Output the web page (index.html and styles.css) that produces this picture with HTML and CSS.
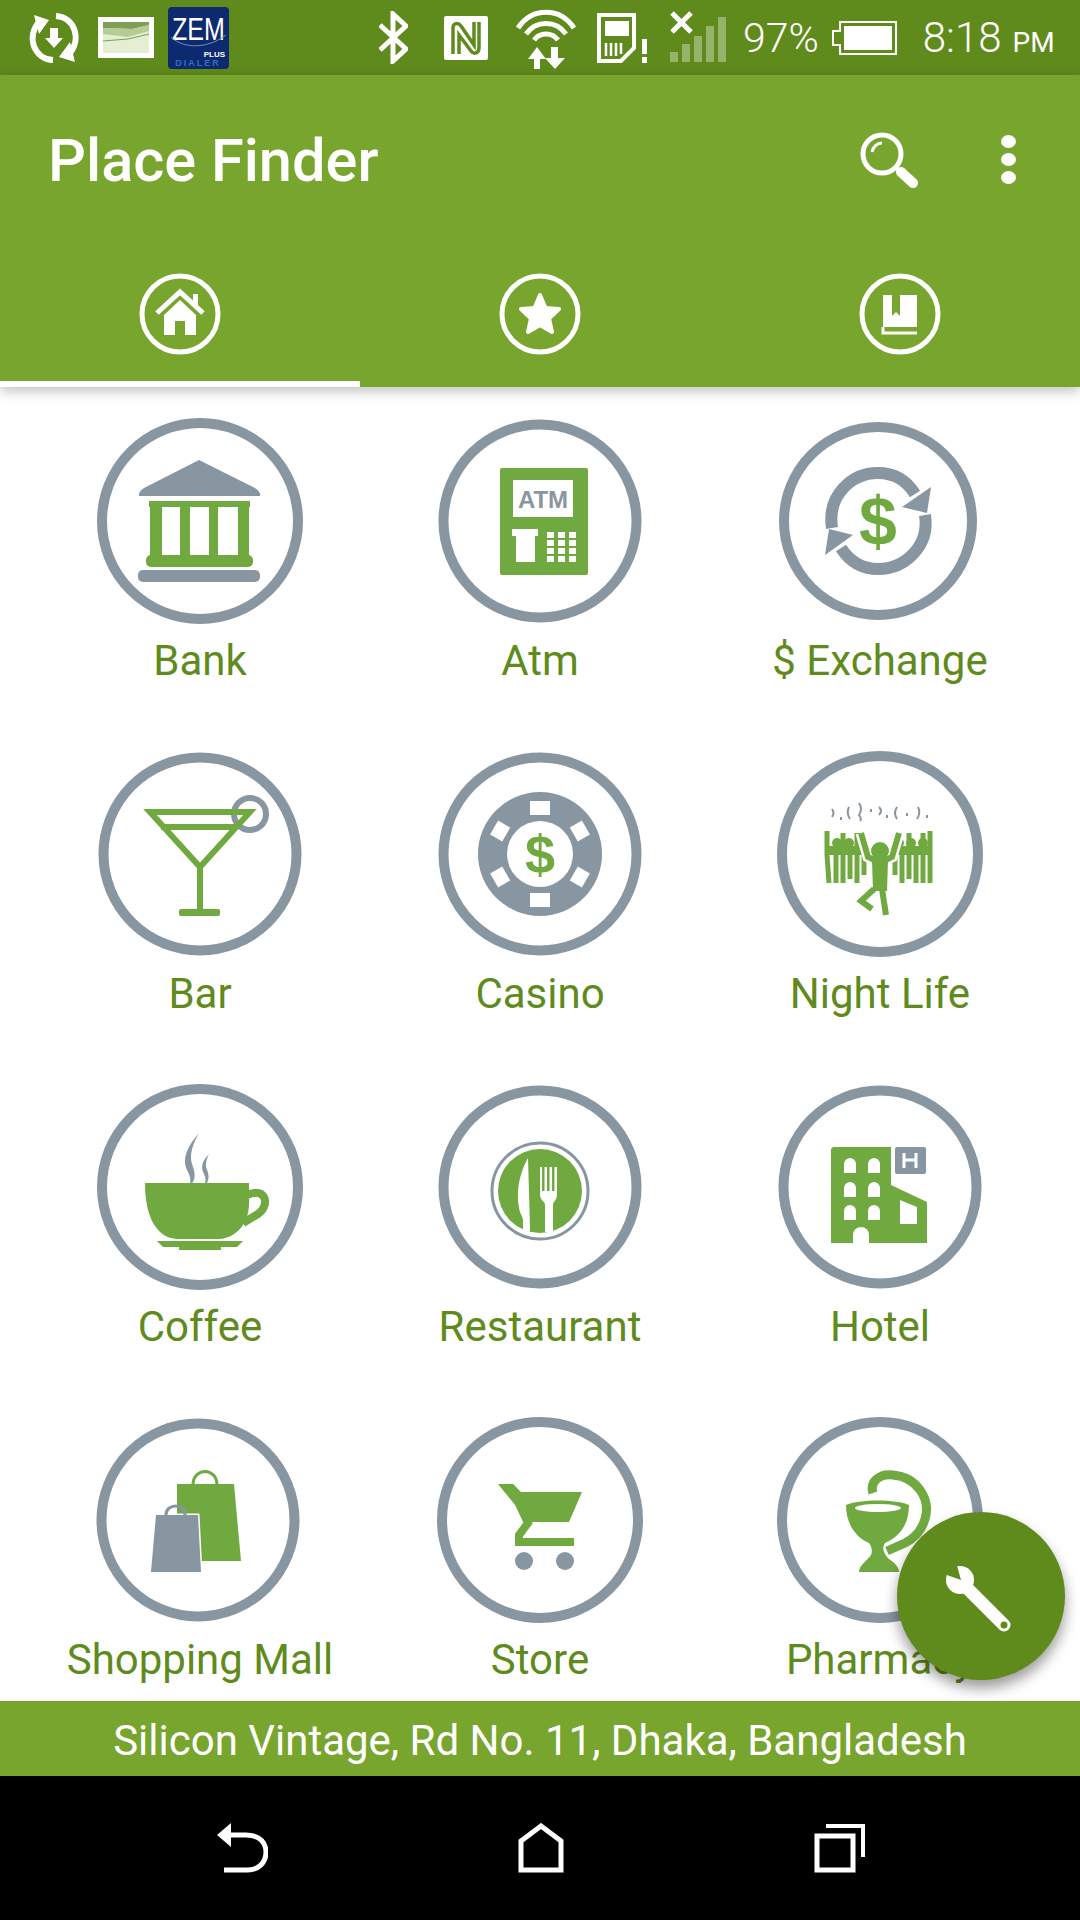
FILE: index.html
```html
<!DOCTYPE html>
<html lang="en">
<head>
  <meta charset="UTF-8">
  <meta name="viewport" content="width=device-width, initial-scale=1.0">
  <title>Place Finder</title>
  <link rel="stylesheet" href="styles.css">
</head>
<body>
  <div class="phone">

    <!-- status bar -->
    <div class="status">
      <svg class="st-sync" width="52" height="52" viewBox="0 0 52 52">
        <path class="line-w" stroke-width="6" d="M25 48 C6 47 -2 25 11 10"/>
        <path class="wh" d="M6 3 L21 8 L11 22 Z"/>
        <path class="line-w" stroke-width="6" d="M28 4 C47 5 54 28 41 42"/>
        <path class="wh" d="M47 50 L31 45 L42 30 Z"/>
        <path class="wh" d="M22 16 H30 V26 H35 L26 36 L17 26 H22 Z"/>
      </svg>
      <svg class="st-pic" width="56" height="41" viewBox="0 0 56 41">
        <rect x="0" y="0" width="56" height="41" fill="#fff"/>
        <rect x="5" y="5" width="46" height="31" fill="#e3eed2"/>
        <path d="M5 5 H51 V8 L34 12 L5 11 Z" fill="#7fa054"/>
        <path d="M5 11 L34 12 L51 8 V14 L30 20 L5 17 Z" fill="#b5cc94"/>
        <path d="M5 24 L30 22 L51 17" stroke="#7fa054" fill="none"/>
      </svg>
      <svg class="st-zem" width="61" height="62" viewBox="0 0 61 62">
        <rect width="61" height="62" rx="4" fill="#0e2a6e"/>
        <text class="zem-big" x="4" y="26.400" transform="scale(1 1.250)">ZEM</text>
        <path d="M3 30 C15 42 40 42 58 28" stroke="#6f8ac0" fill="none"/>
        <text class="zem-small" x="57" y="50" text-anchor="end">PLUS</text>
        <text class="zem-dial" x="30" y="59" text-anchor="middle">DIALER</text>
      </svg>
      <svg class="st-bt" width="29" height="53" viewBox="0 0 29 53">
        <path class="line-w" stroke-width="5" d="M1 14 L27 38 L14 50 V3 L27 15 L1 39"/>
      </svg>
      <svg class="st-nfc" width="44" height="44" viewBox="0 0 44 44">
        <rect width="44" height="44" rx="2" fill="#fff"/>
        <path d="M9 38 V12 C9 7 14 6 17 10 L30 29 V6 M15 38 V19 L27 35 C30 39 35 37 35 32 V6" stroke="#5f8a1c" stroke-width="3.500" fill="none"/>
      </svg>
      <svg class="st-wifi" width="62" height="60" viewBox="0 0 62 60">
        <path class="line-w" stroke-width="5" d="M3 19 C17 -2 45 -2 59 19"/>
        <path class="line-w" stroke-width="5" d="M11 25 C21 11 41 11 51 25"/>
        <path class="line-w" stroke-width="5" d="M19 31 C25 23 37 23 43 31"/>
        <path class="wh" d="M19 60 V50 H13 L22 38 L31 50 H25 V60 Z"/>
        <path class="wh" d="M36 38 H43 V49 H50 L40 60 L30 49 H36 Z"/>
      </svg>
      <svg class="st-sim" width="50" height="50" viewBox="0 0 50 50">
        <path class="line-w" stroke-width="4" d="M2 2 H37 V35 L24 48 H2 Z"/>
        <rect class="wh" x="8" y="8" width="24" height="15"/>
        <path class="line-w" stroke-width="2.500" d="M9 30 V43 M14 30 V43 M19 30 V43 M24 30 V41"/>
        <rect class="wh" x="45" y="26" width="5" height="15"/>
        <rect class="wh" x="45" y="44" width="5" height="6"/>
      </svg>
      <svg class="st-signal" width="56" height="52" viewBox="0 0 56 52">
        <g class="faded">
          <rect x="0" y="41" width="8" height="10"/>
          <rect x="12" y="33" width="8" height="18"/>
          <rect x="24" y="25" width="8" height="26"/>
          <rect x="36" y="15" width="8" height="36"/>
          <rect x="48" y="6" width="8" height="45"/>
        </g>
        <path class="line-w" stroke-width="5" d="M2 2 L21 21 M21 2 L2 21"/>
      </svg>
      <span class="st-pct">97%</span>
      <svg class="st-batt" width="66" height="36" viewBox="0 0 66 36">
        <path d="M9 2 H65 V34 H9 V25 H2 V11 H9 Z" fill="none" stroke="#fff" stroke-width="2"/>
        <rect class="wh" x="13" y="6" width="48" height="24"/>
      </svg>
      <span class="st-time">8:18<small>PM</small></span>
    </div>

    <!-- toolbar + tabs -->
    <header class="appbar">
      <div class="toolbar">
        <h1>Place Finder</h1>
        <svg class="search" width="60" height="58" viewBox="0 0 60 58">
          <circle cx="23" cy="23" r="19" fill="none" stroke="#fff" stroke-width="5"/>
          <path class="line-w" stroke-width="3" d="M13 21 C14 16 18 12 23 12"/>
          <path class="line-w" stroke-width="3" d="M36 36 L42 41"/>
          <path class="line-w" stroke-width="10" stroke-linecap="round" d="M42 41 L54 52"/>
        </svg>
        <div class="more"><i></i><i></i><i></i></div>
      </div>
      <nav class="tabs">
        <div class="tab active">
          <svg width="82" height="82" viewBox="0 0 82 82">
            <circle cx="41" cy="41" r="38" fill="none" stroke="#fff" stroke-width="5"/>
            <path class="line-w" stroke-width="5" d="M18 40 L41 19 L64 40"/>
            <path class="wh" d="M54 21 H59 V33 L54 28 Z"/>
            <path class="wh" d="M25 42 L41 27 L57 42 V62 H46 V48 H36 V62 H25 Z"/>
          </svg>
        </div>
        <div class="tab">
          <svg width="82" height="82" viewBox="0 0 82 82">
            <circle cx="41" cy="41" r="38" fill="none" stroke="#fff" stroke-width="5"/>
            <path class="wh" stroke="#fff" stroke-width="4" stroke-linejoin="round" d="M41 22 L46.500 35 L60 36 L50 45.500 L53 59 L41 52 L29 59 L32 45.500 L22 36 L35.500 35 Z"/>
          </svg>
        </div>
        <div class="tab">
          <svg width="82" height="82" viewBox="0 0 82 82">
            <circle cx="41" cy="41" r="38" fill="none" stroke="#fff" stroke-width="5"/>
            <path class="wh" d="M24 22 H33 V43 L37 39 L41 43 V22 H58 V54 H24 Z"/>
            <path class="line-w" stroke-width="3" d="M24 54 V60 H58"/>
          </svg>
        </div>
      </nav>
    </header>

    <!-- places -->
    <main class="places">
      <div class="grid">

        <div class="place">
          <svg class="pic" width="210" height="210" viewBox="0 0 210 210">
            <circle class="ring" cx="105" cy="105" r="98"/>
            <path class="gy" d="M104 44 L160 72 Q166 76 165 80 H44 Q43 76 49 72 Z"/>
            <rect class="gr" x="54" y="85" width="101" height="6"/>
            <rect class="gr" x="55" y="90" width="12" height="50"/>
            <rect class="gr" x="85" y="90" width="10" height="50"/>
            <rect class="gr" x="114" y="90" width="9" height="50"/>
            <rect class="gr" x="143" y="90" width="11" height="50"/>
            <rect class="gr" x="51" y="139" width="107" height="12" rx="5"/>
            <rect class="gy" x="43" y="154" width="122" height="12" rx="5"/>
          </svg>
          <span>Bank</span>
        </div>

        <div class="place">
          <svg class="pic" width="210" height="210" viewBox="0 0 210 210">
            <circle class="ring" cx="105" cy="105" r="96.500"/>
            <rect class="gr" x="65" y="52" width="88" height="107" rx="2"/>
            <rect class="wh" x="78" y="64" width="60" height="37"/>
            <text class="atm" x="108" y="92" text-anchor="middle">ATM</text>
            <path class="wh" d="M77 113 H103 V120 H100 V146 H81 V120 H77 Z"/>
            <g class="wh">
              <rect x="112" y="116" width="7" height="6"/><rect x="123" y="116" width="7" height="6"/><rect x="134" y="116" width="7" height="6"/>
              <rect x="112" y="124" width="7" height="6"/><rect x="123" y="124" width="7" height="6"/><rect x="134" y="124" width="7" height="6"/>
              <rect x="112" y="132" width="7" height="6"/><rect x="123" y="132" width="7" height="6"/><rect x="134" y="132" width="7" height="6"/>
              <rect x="112" y="140" width="7" height="6"/><rect x="123" y="140" width="7" height="6"/><rect x="134" y="140" width="7" height="6"/>
            </g>
          </svg>
          <span>Atm</span>
        </div>

        <div class="place">
          <svg class="pic" width="210" height="210" viewBox="2 0 210 210">
            <circle class="ring" cx="105" cy="105" r="94"/>
            <path class="line-g" stroke-width="12" d="M59 112 C54 80 78 57 105 57 C122 57 134 65 142 78"/>
            <path class="line-g" stroke-width="12" d="M152 99 C157 130 132 153 105 153 C89 153 77 146 68 132"/>
            <path class="gy" d="M158 71 L129 91 L154 97 Z"/>
            <path class="gy" d="M52 139 L80 119 L56 113 Z"/>
            <text class="dollar dollar-big" x="105" y="129" text-anchor="middle">$</text>
          </svg>
          <span>$ Exchange</span>
        </div>

        <div class="place">
          <svg class="pic" width="210" height="210" viewBox="0 0 210 210">
            <circle class="ring" cx="105" cy="105" r="96.500"/>
            <circle cx="155" cy="65" r="16" fill="#fff" stroke="#8796a0" stroke-width="6"/>
            <path class="line-gr" stroke-width="6" d="M55 63 H155 L105 118 Z M66 78 H142 M105 118 V162"/>
            <rect class="gr" x="84" y="160" width="41" height="7" rx="2"/>
          </svg>
          <span>Bar</span>
        </div>

        <div class="place">
          <svg class="pic" width="210" height="210" viewBox="0 0 210 210">
            <circle class="ring" cx="105" cy="105" r="96.500"/>
            <circle class="gy" cx="105" cy="105" r="62"/>
            <circle class="wh" cx="105" cy="105" r="33"/>
            <g class="wh">
              <rect x="95" y="52" width="20" height="14"/>
              <rect x="97" y="52" width="16" height="14" transform="rotate(60 105 105)"/>
              <rect x="97" y="52" width="16" height="14" transform="rotate(120 105 105)"/>
              <rect x="95" y="52" width="20" height="14" transform="rotate(180 105 105)"/>
              <rect x="97" y="52" width="16" height="14" transform="rotate(240 105 105)"/>
              <rect x="97" y="52" width="16" height="14" transform="rotate(300 105 105)"/>
            </g>
            <text class="dollar" x="105" y="124" text-anchor="middle">$</text>
          </svg>
          <span>Casino</span>
        </div>

        <div class="place">
          <svg class="pic" width="210" height="210" viewBox="0 0 210 210">
            <circle class="ring" cx="105" cy="105" r="98"/>
            <path class="line-g" stroke-width="2" d="M57 60 q3 4 0 8 M66 68 v3 M74 58 q-3 6 1 12 M84 54 q4 6 0 12 q3 4 1 6 M96 60 v3 M104 58 q4 4 0 8 M112 66 v3 M122 58 q-4 6 0 12 M132 64 v3 M143 58 q3 6 -1 12 M152 66 v3"/>
            <!-- crowd behind the dancer -->
            <g class="gr">
              <rect x="51" y="97" width="44" height="9"/>
              <rect x="117" y="97" width="40" height="9"/>
              <circle cx="62" cy="94" r="5"/><circle cx="74" cy="94" r="5"/><circle cx="86" cy="94" r="5"/>
              <circle cx="124" cy="94" r="5"/><circle cx="136" cy="94" r="5"/><circle cx="148" cy="94" r="5"/>
            </g>
            <path class="line-gr" stroke-width="5" d="M52 82 V106 L54 134 M61 134 V100 M68 134 V84 M75 130 V100 M82 134 V84 M89 126 V86 M120 126 V86 M127 134 V100 M134 130 V84 M141 134 V100 M148 134 V84 M155 134 V82"/>
            <path d="M86 84 L93 108 L105 114 L117 108 L124 84 M105 114 V142 L98 158 M105 142 L111 166 M98 140 L86 152 L97 160" fill="none" stroke="#fff" stroke-width="11"/>
            <circle class="wh" cx="105" cy="102" r="12"/>
            <path class="line-gr" stroke-width="6" d="M86 84 L93 108 L105 114 L117 108 L124 84"/>
            <path class="gr" d="M97 112 H113 L112 142 H98 Z"/>
            <path class="line-gr" stroke-width="6" d="M107 140 L111 166 M99 140 L86 152 L97 160"/>
            <circle class="gr" cx="105" cy="102" r="9"/>
          </svg>
          <span>Night Life</span>
        </div>

        <div class="place">
          <svg class="pic" width="210" height="210" viewBox="0 0 210 210">
            <circle class="ring" cx="105" cy="105" r="98"/>
            <path class="gy" d="M104 51 C88 70 88 80 93 90 C96 96 96 100 94 105 C102 98 100 90 97 82 C94 72 98 62 104 51 Z"/>
            <path class="gy" d="M114 72 C106 80 106 86 109 92 C111 96 111 100 109 104 C115 100 114 92 112 88 C110 83 111 78 114 72 Z"/>
            <path class="line-gr" stroke-width="8" d="M152 113 C172 104 175 124 163 132 L148 141"/>
            <path class="gr" d="M50 101 H154 V122 C154 140 142 156 124 157 H82 C62 156 50 136 50 101 Z"/>
            <path class="gr" d="M62 159 H148 L142 165 H126 V168 H84 V165 H68 Z"/>
          </svg>
          <span>Coffee</span>
        </div>

        <div class="place">
          <svg class="pic" width="210" height="210" viewBox="0 0 210 210">
            <circle class="ring" cx="105" cy="105" r="96.500"/>
            <circle cx="105" cy="109" r="48" fill="none" stroke="#8796a0" stroke-width="3"/>
            <circle class="gr" cx="105" cy="109" r="42"/>
            <path class="wh" d="M93 76 C85 90 80 110 85 130 C87 135 88 135 88 140 V150 H93 C95 150 95 148 95 146 Z"/>
            <path class="wh" d="M105 85 H107 V109 H109.500 V85 H112 V109 H114.500 V85 H117 V109 H119.500 V85 H122 V112 C122 118 119 119 118 122 V150 H110 V122 C109 119 105 118 105 112 Z"/>
          </svg>
          <span>Restaurant</span>
        </div>

        <div class="place">
          <svg class="pic" width="210" height="210" viewBox="0 0 210 210">
            <circle class="ring" cx="105" cy="105" r="96.500"/>
            <path class="gr" d="M58 65 H116 V103 L152 120 V161 H56 V67 Z"/>
            <rect class="gy" x="120" y="65" width="31" height="27" rx="2"/>
            <path class="line-w" stroke-width="3" d="M129 71 V86 M141 71 V86 M129 78 H141"/>
            <g class="wh">
              <path d="M69 82 a6 6 0 0 1 12 0 v9 h-12 Z"/><path d="M93 82 a6 6 0 0 1 12 0 v9 h-12 Z"/>
              <path d="M69 106 a6 6 0 0 1 12 0 v9 h-12 Z"/><path d="M93 106 a6 6 0 0 1 12 0 v9 h-12 Z"/>
              <path d="M69 129 a6 6 0 0 1 12 0 v9 h-12 Z"/><path d="M93 129 a6 6 0 0 1 12 0 v9 h-12 Z"/>
              <path d="M78 161 v-8 a8 8 0 0 1 16 0 v8 Z"/>
              <path d="M125 118 L142 125 V142 H125 Z"/>
            </g>
          </svg>
          <span>Hotel</span>
        </div>

        <div class="place">
          <svg class="pic" width="210" height="210" viewBox="2 0 210 210">
            <circle class="ring" cx="105" cy="105" r="96.500"/>
            <path d="M100 70 C100 52 124 52 124 70" fill="none" stroke="#6fa93f" stroke-width="3"/>
            <path class="gr" d="M84 69 H141 L148 146 H108 L84 100 Z"/>
            <path d="M63 100 H105 L108 158 H58 Z" fill="#fff" stroke="#fff" stroke-width="3"/>
            <path d="M73 100 C73 88 92 88 92 100" fill="none" stroke="#8796a0" stroke-width="3"/>
            <path class="gy" d="M63 100 H105 L108 157 H58 Z"/>
          </svg>
          <span>Shopping Mall</span>
        </div>

        <div class="place">
          <svg class="pic" width="210" height="210" viewBox="0 0 210 210">
            <circle class="ring" cx="105" cy="105" r="98"/>
            <path class="gr" d="M63 69 H78 L86 77 H147 L134 107 H94 Z"/>
            <path class="line-gr" stroke-width="8" d="M76 72 L93 108 L84 120 V127 H139"/>
            <circle class="gy" cx="89" cy="146" r="9"/>
            <circle class="gy" cx="130" cy="146" r="9"/>
          </svg>
          <span>Store</span>
        </div>

        <div class="place">
          <svg class="pic" width="210" height="210" viewBox="0 0 210 210">
            <circle class="ring" cx="105" cy="105" r="98"/>
            <path class="line-gr" stroke-width="9" d="M98 78 C94 66 106 58 118 60 C142 62 156 84 150 104 C146 118 138 124 130 128 L112 136"/>
            <path class="gr" d="M71 90 C84 84 122 84 134 90 C134 110 124 122 110 128 C106 134 110 140 114 144 C120 148 124 152 124 157 H84 C84 150 92 146 96 140 C98 136 96 130 94 128 C80 122 71 108 71 90 Z"/>
            <ellipse class="wh" cx="103" cy="93" rx="23" ry="4"/>
          </svg>
          <span>Pharmacy</span>
        </div>

      </div>
    </main>

    <div class="address">Silicon Vintage, Rd No. 11, Dhaka, Bangladesh</div>

    <div class="navbar">
      <svg width="52" height="50" viewBox="0 0 52 50">
        <path class="wh" d="M1 12 L15 0 V24 Z"/>
        <path class="line-w" stroke-width="5" d="M12 12 H30 C44 12 50 20 50 29 C50 40 42 47 32 47 H8"/>
      </svg>
      <svg width="46" height="50" viewBox="0 0 46 50">
        <path class="line-w" stroke-width="5" d="M3 47 V18 L23 3 L43 18 V47 Z"/>
      </svg>
      <svg width="52" height="50" viewBox="0 0 52 50">
        <rect x="3" y="13" width="36" height="34" fill="none" stroke="#fff" stroke-width="5"/>
        <path class="line-w" stroke-width="4" d="M12 3 H49 V34"/>
      </svg>
    </div>

    <button class="fab">
      <svg width="168" height="168" viewBox="0 0 168 168">
        <path class="line-w" stroke-width="13" stroke-linecap="round" d="M64 70 L107 113"/>
        <circle class="wh" cx="63" cy="68" r="14"/>
        <path d="M47 62 L64 68 L59 50 L50 50 Z" fill="#5f8a1c"/>
        <circle cx="107" cy="113" r="3.500" fill="#5f8a1c"/>
      </svg>
    </button>

  </div>
</body>
</html>
```

FILE: styles.css
```css
* {
  box-sizing: border-box;
}
body {
  margin: 0;
  font-family: Roboto, "Liberation Sans", sans-serif;
  background-color: #fff;
}
.phone {
  position: relative;
  width: 1080px;
  height: 1920px;
  display: flex;
  flex-direction: column;
  overflow: hidden;
}

/* svg helpers */
.wh { fill: #fff; }
.gr { fill: #6fa93f; }
.gy { fill: #8796a0; }
.faded { fill: rgba(255, 255, 255, 0.35); }
.ring {
  fill: none;
  stroke: #8796a0;
  stroke-width: 10;
}
.line-w {
  fill: none;
  stroke: #fff;
}
.line-g {
  fill: none;
  stroke: #8796a0;
}
.line-gr {
  fill: none;
  stroke: #6fa93f;
}

/* status bar */
.status {
  height: 75px;
  flex: none;
  display: flex;
  align-items: center;
  background-color: #5f8a1c;
  color: #fff;
  padding-left: 28px;
}
.status svg {
  flex: none;
}
.st-pic { margin-left: 18px; }
.st-zem { margin-left: 14px; }
.st-bt { margin-left: 150px; }
.st-nfc { margin-left: 36px; }
.st-wifi { margin-left: 27px; margin-top: 2px; }
.st-sim { margin-left: 20px; }
.st-signal { margin-left: 23px; margin-top: -2px; }
.st-pct {
  margin-left: 17px;
  font-size: 41px;
  font-weight: 300;
}
.st-batt { margin-left: 12px; }
.st-time {
  margin-left: 26px;
  font-size: 42px;
  font-weight: 300;
}
.st-time small {
  font-size: 28px;
  font-weight: 400;
  margin-left: 11px;
}
.zem-big {
  font-family: "Liberation Sans", sans-serif;
  font-size: 25px;
  fill: #fff;
}
.zem-small {
  font-family: "Liberation Sans", sans-serif;
  font-size: 8px;
  font-weight: bold;
  fill: #fff;
}
.zem-dial {
  font-family: "Liberation Sans", sans-serif;
  font-size: 9px;
  font-weight: bold;
  letter-spacing: 2px;
  fill: #2f6fc4;
}

/* toolbar and tabs */
.appbar {
  flex: none;
  background-color: #78a52e;
  position: relative;
  z-index: 1;
  box-shadow: 0 4px 12px rgba(0, 0, 0, 0.25);
}
.toolbar {
  height: 172px;
  display: flex;
  align-items: center;
  padding-left: 48px;
  color: #fff;
}
.toolbar h1 {
  margin: 0;
  flex: 1;
  font-size: 59.500px;
  font-weight: 500;
}
.search {
  margin-top: -2px;
}
.more {
  margin: -4px 64px 0 82px;
  display: flex;
  flex-direction: column;
  gap: 5px;
}
.more i {
  display: block;
  width: 15px;
  height: 13px;
  border-radius: 50%;
  background-color: #fff;
}
.tabs {
  height: 140px;
  display: flex;
}
.tab {
  flex: 1;
  display: flex;
  align-items: center;
  justify-content: center;
  border-bottom: 6px solid transparent;
}
.tab.active {
  border-bottom-color: #fff;
}

/* places grid */
.places {
  flex: 1;
  overflow: hidden;
  padding: 29px 30px 0;
}
.grid {
  display: grid;
  grid-template-columns: repeat(3, 340px);
  row-gap: 63px;
}
.place {
  display: flex;
  flex-direction: column;
  align-items: center;
}
.pic {
  display: block;
}
.place span {
  margin-top: 10px;
  line-height: 50px;
  font-size: 42px;
  color: #5f8a1c;
  white-space: nowrap;
}
.atm {
  font-family: "Liberation Sans", sans-serif;
  font-size: 24px;
  font-weight: bold;
  fill: #8796a0;
}
.dollar {
  font-family: "Liberation Sans", sans-serif;
  font-size: 54px;
  font-weight: bold;
  fill: #6fa93f;
}
.dollar-big {
  font-size: 68px;
}

/* bottom */
.address {
  height: 75px;
  flex: none;
  display: flex;
  align-items: center;
  justify-content: center;
  padding-top: 3px;
  background-color: #78a52e;
  color: #fff;
  font-size: 42px;
}
.navbar {
  height: 144px;
  flex: none;
  display: flex;
  align-items: center;
  background-color: #000;
  padding: 0 214px 0 216px;
  justify-content: space-between;
}
.fab {
  position: absolute;
  left: 897px;
  top: 1512px;
  width: 168px;
  height: 168px;
  padding: 0;
  border: none;
  border-radius: 50%;
  background-color: #5f8a1c;
  box-shadow: 0 8px 14px rgba(0, 0, 0, 0.4);
}
.fab svg {
  display: block;
}
```
